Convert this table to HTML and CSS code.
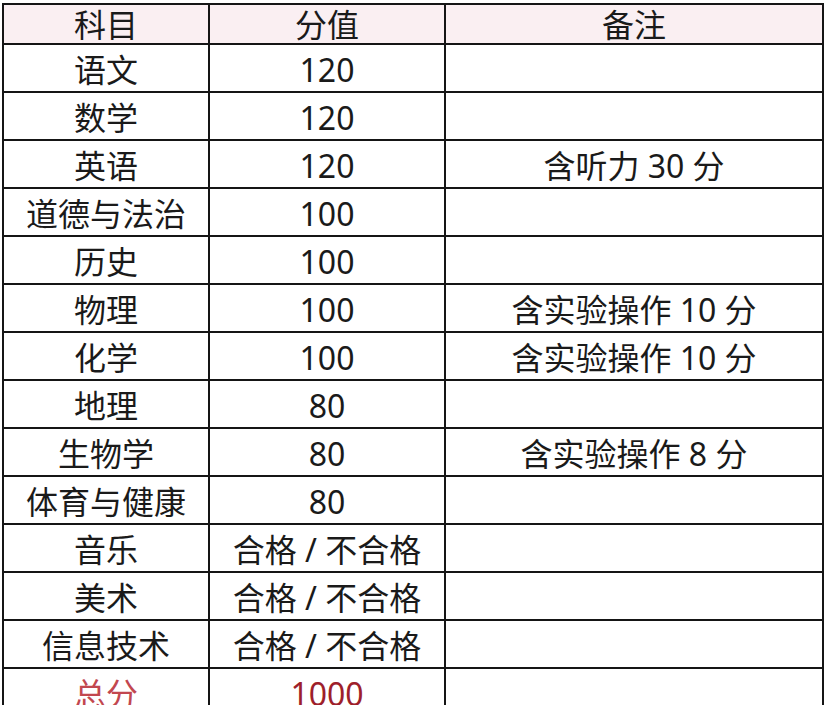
FILE: index.html
```html
<!DOCTYPE html>
<html lang="zh-CN">
<head>
<meta charset="utf-8">
<title>科目分值</title>
<link rel="stylesheet" href="styles.css">
</head>
<body>
<table class="score-table">
  <colgroup>
    <col class="c1"><col class="c2"><col class="c3">
  </colgroup>
  <thead>
    <tr class="head"><th>科目</th><th>分值</th><th>备注</th></tr>
  </thead>
  <tbody>
    <tr><td>语文</td><td class="num">120</td><td></td></tr>
    <tr><td>数学</td><td class="num">120</td><td></td></tr>
    <tr><td>英语</td><td class="num">120</td><td class="note">含听力 30 分</td></tr>
    <tr><td>道德与法治</td><td class="num">100</td><td></td></tr>
    <tr><td>历史</td><td class="num">100</td><td></td></tr>
    <tr><td>物理</td><td class="num">100</td><td class="note">含实验操作 10 分</td></tr>
    <tr><td>化学</td><td class="num">100</td><td class="note">含实验操作 10 分</td></tr>
    <tr><td>地理</td><td class="num">80</td><td></td></tr>
    <tr><td>生物学</td><td class="num">80</td><td class="note">含实验操作 8 分</td></tr>
    <tr><td>体育与健康</td><td class="num">80</td><td></td></tr>
    <tr><td>音乐</td><td>合格 / 不合格</td><td></td></tr>
    <tr><td>美术</td><td>合格 / 不合格</td><td></td></tr>
    <tr><td>信息技术</td><td>合格 / 不合格</td><td></td></tr>
    <tr class="total"><td class="total-label">总分</td><td class="num total-num">1000</td><td></td></tr>
  </tbody>
</table>
</body>
</html>
```

FILE: styles.css
```css
html, body {
  margin: 0;
  padding: 0;
  background: #ffffff;
  overflow: hidden;
}

body {
  font-family: "Noto Sans", "Noto Sans CJK SC", sans-serif;
  color: #1a1a1a;
}

.score-table {
  margin: 3px 0 0 2px;
  border-collapse: collapse;
  table-layout: fixed;
  width: 822px;
}

.c1 { width: 206px; }
.c2 { width: 236px; }
.c3 { width: 378px; }

.score-table th,
.score-table td {
  border: 2px solid #151515;
  padding: 0;
  text-align: center;
  vertical-align: middle;
  font-size: 32px;
  font-weight: 400;
  line-height: 1;
  white-space: nowrap;
  box-sizing: border-box;
}

.score-table th {
  height: 40px;
  background: #faeff2;
  padding-top: 2px;
}

.score-table td {
  height: 48px;
  padding-top: 4px;
}

.num {
  font-size: 29px;
}

.total-label {
  color: #c2474f;
}

.total-num {
  color: #9e1f2b;
}
```
